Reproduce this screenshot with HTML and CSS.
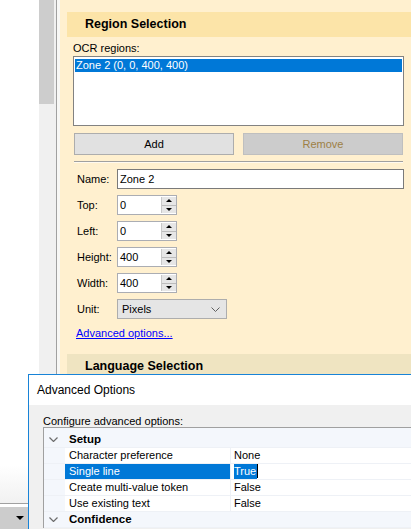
FILE: index.html
```html
<!DOCTYPE html>
<html>
<head>
<meta charset="utf-8">
<title>Region Selection</title>
<link rel="stylesheet" href="styles.css">
</head>
<body>
<div class="app">
  <div class="left-pane">
    <div class="left-fill"></div>
    <div class="left-bar"><div class="left-bar-inner"><span class="drop-arrow"></span></div></div>
  </div>
  <div class="vscroll"><div class="thumb"></div></div>
  <div class="panel">
    <section class="group">
      <div class="group-head">Region Selection</div>
      <div class="group-body">
        <div class="caption">OCR regions:</div>
        <div class="listbox"><div class="list-item selected">Zone 2 (0, 0, 400, 400)</div></div>
        <div class="btn-row">
          <button class="btn">Add</button>
          <button class="btn disabled">Remove</button>
        </div>
        <div class="sep"></div>
        <div class="form">
          <label class="lbl">Name:</label>
          <div class="textbox">Zone 2</div>
          <label class="lbl">Top:</label>
          <div class="spin"><span class="spin-val">0</span><span class="spin-btns"><span class="sb up"></span><span class="sb down"></span></span></div>
          <label class="lbl">Left:</label>
          <div class="spin"><span class="spin-val">0</span><span class="spin-btns"><span class="sb up"></span><span class="sb down"></span></span></div>
          <label class="lbl">Height:</label>
          <div class="spin"><span class="spin-val">400</span><span class="spin-btns"><span class="sb up"></span><span class="sb down"></span></span></div>
          <label class="lbl">Width:</label>
          <div class="spin"><span class="spin-val">400</span><span class="spin-btns"><span class="sb up"></span><span class="sb down"></span></span></div>
          <label class="lbl">Unit:</label>
          <div class="combo"><span>Pixels</span><svg class="combo-chev" width="9" height="5" viewBox="0 0 9 5"><path d="M0.5 0.5 L4.5 4.5 L8.5 0.5" fill="none" stroke="#606060" stroke-width="1"/></svg></div>
        </div>
        <a class="link" href="#">Advanced options...</a>
      </div>
    </section>
    <section class="group lang">
      <div class="group-head">Language Selection</div>
    </section>
  </div>
</div>

<div class="dialog">
  <div class="dlg-title">Advanced Options</div>
  <div class="dlg-body">
    <div class="dlg-caption">Configure advanced options:</div>
    <div class="pgrid">
      <div class="prow cat first">
        <span class="gutter"><svg width="9" height="5" viewBox="0 0 9 5"><path d="M0.5 0.5 L4.5 4.5 L8.5 0.5" fill="none" stroke="#6d6d6d" stroke-width="1.2"/></svg></span>
        <span class="cat-name">Setup</span>
      </div>
      <div class="prow">
        <span class="gutter"></span><span class="pname">Character preference</span><span class="pval">None</span>
      </div>
      <div class="prow sel">
        <span class="gutter"></span><span class="pname">Single line</span><span class="pval"><span class="edit-sel">True</span><span class="caret"></span></span>
      </div>
      <div class="prow">
        <span class="gutter"></span><span class="pname">Create multi-value token</span><span class="pval">False</span>
      </div>
      <div class="prow">
        <span class="gutter"></span><span class="pname">Use existing text</span><span class="pval">False</span>
      </div>
      <div class="prow cat">
        <span class="gutter"><svg width="9" height="5" viewBox="0 0 9 5"><path d="M0.5 0.5 L4.5 4.5 L8.5 0.5" fill="none" stroke="#6d6d6d" stroke-width="1.2"/></svg></span>
        <span class="cat-name">Confidence</span>
      </div>
    </div>
  </div>
</div>
</body>
</html>
```

FILE: styles.css
```css
* { box-sizing: border-box; margin: 0; padding: 0; }
html, body { width: 411px; height: 529px; overflow: hidden; }
body {
  font-family: "Liberation Sans", Arial, sans-serif;
  font-size: 11px;
  color: #000;
  background: #fff;
  position: relative;
}

.app { display: flex; height: 529px; }

/* left pane */
.left-pane { width: 39px; display: flex; flex-direction: column; }
.left-fill { flex: 1; background: linear-gradient(#fff 0, #fff 465px, #f1f1f1 503px); }
.left-bar { border-top: 1px solid #a0a0a0; padding-top: 3px; background: #fff; }
.left-bar-inner { height: 22px; background: #cccccc; display: flex; align-items: center; padding-left: 16px; }
.drop-arrow { width: 0; height: 0; border-left: 4px solid transparent; border-right: 4px solid transparent; border-top: 4px solid #000; }

/* scrollbar */
.vscroll { width: 18px; background: #f0f0f0; border-right: 1px solid #a0a0a0; }
.thumb { width: 15px; height: 104px; background: #cdcdcd; }

/* panel */
.panel { flex: 1; background: #fff0cf; border-left: 3px solid #f7f7f5; }
.group-head {
  margin-left: 7px;
  height: 25px;
  line-height: 25px;
  padding-left: 18px;
  background: #fce4a8;
  font-weight: bold;
  font-size: 12.5px;
}
.group:first-child .group-head { margin-top: 12px; }
.group-body { padding: 0 7px 0 13px; }
.caption { margin-top: 5px; line-height: 13px; }
.listbox { margin-top: 1px; height: 70px; background: #fff; border: 1px solid #828282; padding: 2px 1px; }
.list-item { height: 13px; line-height: 13px; padding-left: 1px; }
.list-item.selected { background: #0078d7; color: #fff; }

.btn-row { margin-top: 7px; padding: 0 1px; display: grid; grid-template-columns: 1fr 1fr; column-gap: 9px; }
.btn {
  height: 22px;
  border: 1px solid #adadad;
  background: #e1e1e1;
  font-family: inherit;
  font-size: 11px;
  color: #000;
}
.btn.disabled { background: #cccccc; border-color: #bfbfbf; color: #9d8045; }

.sep { margin: 6px 1px 0; height: 1px; background: #a0a0a0; box-shadow: 0 1px 0 #fffaf0; }

.form {
  margin-top: 7px;
  padding-left: 4px;
  display: grid;
  grid-template-columns: 40px 1fr;
  grid-auto-rows: 20px;
  row-gap: 6px;
  align-items: center;
}
.lbl { line-height: 13px; }
.textbox { height: 20px; border: 1px solid #7a7a7a; background: #fff; padding-left: 2px; line-height: 18px; }
.spin { width: 60px; height: 20px; border: 1px solid #abadb3; background: #fff; display: flex; }
.spin-val { flex: 1; padding-left: 2px; line-height: 18px; }
.spin-btns { width: 15px; margin: 1px 0 1px 0; display: flex; flex-direction: column; border-left: 1px solid #c8c8c8; }
.sb { flex: 1; background: #e6e6e6; display: flex; align-items: center; justify-content: center; }
.sb.up { border-bottom: 1px solid #bcbcbc; }
.sb.up::after { content: ""; border-left: 3px solid transparent; border-right: 3px solid transparent; border-bottom: 3px solid #000; }
.sb.down::after { content: ""; border-left: 3px solid transparent; border-right: 3px solid transparent; border-top: 3px solid #000; }

.combo {
  width: 110px;
  height: 20px;
  border: 1px solid #adadad;
  background: #e5e5e5;
  display: flex;
  align-items: center;
  justify-content: space-between;
  padding: 0 6px 0 4px;
  line-height: 18px;
}
.combo-chev { display: block; }

.link { display: block; margin-top: 8px; padding-left: 3px; line-height: 13px; color: #0000ff; text-decoration: underline; width: max-content; }

.group.lang { margin-top: 14px; }
.lang .group-head { background: #efe4c1; }

/* dialog */
.dialog {
  position: absolute;
  left: 28px;
  top: 374px;
  right: 0;
  bottom: 0;
  border-top: 1px solid #1883d7;
  border-left: 1px solid #1883d7;
  background: #f0f0f0;
  overflow: hidden;
}
.dlg-title { height: 30px; line-height: 30px; padding-left: 8px; background: #fff; font-size: 12px; }
.dlg-body { padding: 10px 0 0 14px; }
.dlg-caption { line-height: 12px; }
.pgrid { border-top: 1px solid #a0a0a0; border-left: 1px solid #a0a0a0; background: #fff; }
.prow { display: flex; height: 16px; border-bottom: 1px solid #eef1f6; line-height: 15px; }
.prow.first { height: 20px; padding-top: 4px; }
.gutter { width: 21px; flex: none; background: #f4f7fc; display: flex; align-items: center; padding-left: 5px; }
.pname { width: 166px; flex: none; padding-left: 4px; border-right: 1px solid #eef1f6; white-space: nowrap; }
.pval { flex: 1; padding-left: 3px; display: flex; align-items: flex-start; }
.prow.sel .pname { background: #0078d7; color: #fff; }
.edit-sel { background: #0078d7; color: #fff; padding: 0 1px 0 0; height: 15px; }
.caret { width: 1px; height: 14px; background: #000; margin-top: 0; }
.prow.cat { background: #f4f7fc; }
.cat-name { padding-left: 4px; font-weight: bold; font-size: 11.5px; }
```
